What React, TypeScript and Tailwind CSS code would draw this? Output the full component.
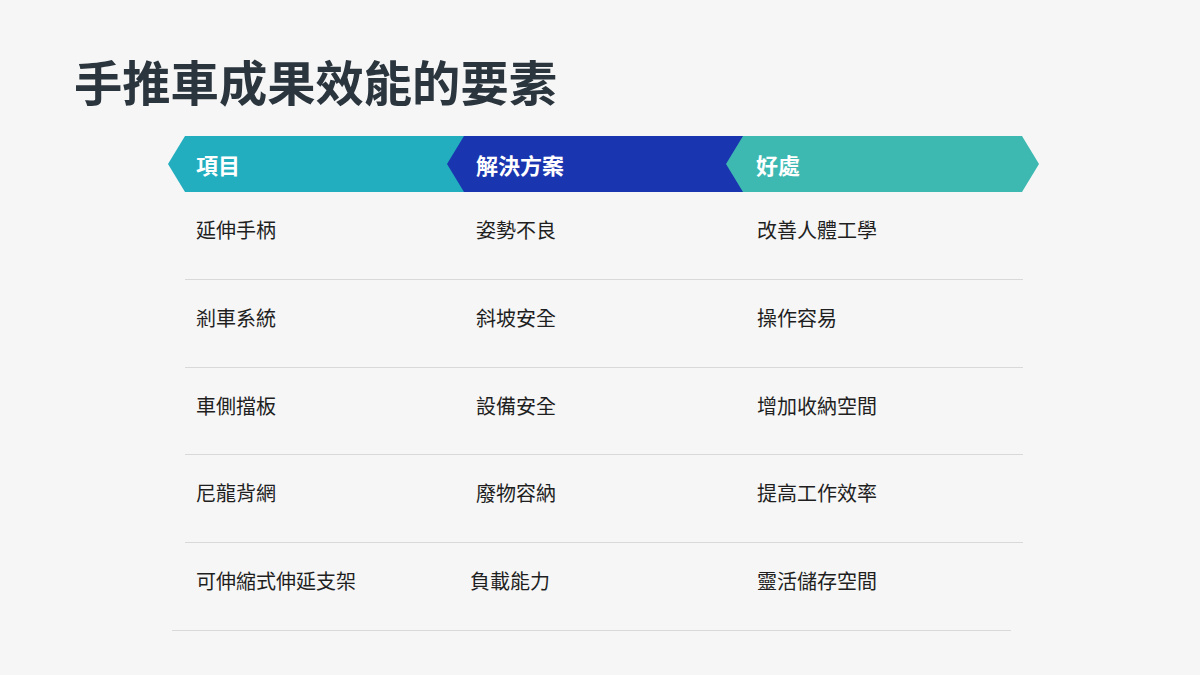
import React from "react";

const rows: [string, string, string][] = [
  ["延伸手柄", "姿勢不良", "改善人體工學"],
  ["剎車系統", "斜坡安全", "操作容易"],
  ["車側擋板", "設備安全", "增加收納空間"],
  ["尼龍背網", "廢物容納", "提高工作效率"],
];

const hex = "[clip-path:polygon(17px_0,296px_0,313px_50%,296px_100%,17px_100%,0_50%)]";

export default function App() {
  return (
    <div
      className="w-[1200px] h-[675px] bg-[#f6f6f6] overflow-hidden"
      style={{ fontFamily: '"Noto Sans CJK TC", "Noto Sans", sans-serif' }}
    >
      <h1 className="ml-[74px] pt-[51px] text-[48.3px] leading-[58px] font-bold text-[#2b353e]">
        手推車成果效能的要素
      </h1>
      <div className="mt-[27px] ml-[168px] flex h-[56px]">
        <div className={`w-[313px] h-[56px] shrink-0 bg-[#22aebe] flex items-center pl-[28px] text-white text-[22px] font-bold ${hex}`}>
          項目
        </div>
        <div className={`w-[313px] h-[56px] shrink-0 -ml-[34px] bg-[#1a35b0] flex items-center pl-[29px] text-white text-[22px] font-bold ${hex}`}>
          解決方案
        </div>
        <div className={`w-[313px] h-[56px] shrink-0 -ml-[34px] bg-[#3db9b2] flex items-center pl-[30px] text-white text-[22px] font-bold ${hex}`}>
          好處
        </div>
      </div>
      <div className="ml-[185px] w-[838px]">
        {rows.map((r, i) => (
          <div key={i} className="grid grid-cols-[280px_281px_1fr] h-[87.8px] pt-[24px] border-b-[1.5px] border-[#d9d9d9] text-[20px] leading-[28px] text-[#1f1f1f]">
            <div className="pl-[11px]">{r[0]}</div>
            <div className="pl-[11px]">{r[1]}</div>
            <div className="pl-[11px]">{r[2]}</div>
          </div>
        ))}
      </div>
      <div className="ml-[172px] w-[839px] flex h-[87.8px] pt-[24px] border-b-[1.5px] border-[#d9d9d9] text-[20px] leading-[28px] text-[#1f1f1f]">
        <div className="w-[298px] pl-[24px]">可伸縮式伸延支架</div>
        <div className="w-[287px]">負載能力</div>
        <div>靈活儲存空間</div>
      </div>
    </div>
  );
}
